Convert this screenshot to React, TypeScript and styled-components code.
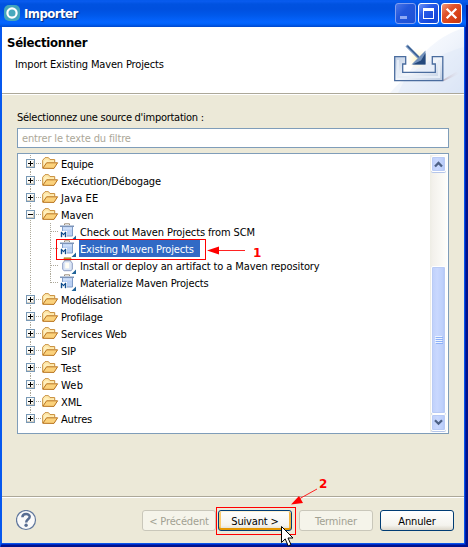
import React from 'react';
import styled, { createGlobalStyle, css } from 'styled-components';

const GlobalStyle = createGlobalStyle`
  * { box-sizing: border-box; }
  html, body { margin: 0; padding: 0; overflow: hidden; }
  body {
    font-family: "DejaVu Sans Condensed", "DejaVu Sans", Tahoma, sans-serif;
    font-stretch: condensed;
    font-size: 11px;
    line-height: 13px;
    color: #000;
  }
  svg { display: block; flex: none; }
`;

const Window = styled.div`
  position: relative;
  display: flex;
  flex-direction: column;
  width: 468px;
  height: 547px;
  overflow: hidden;
  background: #ece9d8;
`;

const TitleBar = styled.header`
  display: flex;
  flex: none;
  align-items: flex-start;
  height: 27px;
  padding: 3px 6px 0 4px;
  background: linear-gradient(#0358e8 0, #0a5cf0 1px, #0052e0 4px, #0050df 9px, #0058ea 15px, #0565ff 22px, #0062fa 24px, #0048cc 27px);
`;

const TitleText = styled.h1`
  flex: 1;
  margin: 4px 0 0 4px;
  font-size: 13px;
  line-height: 14px;
  letter-spacing: -0.55px;
  color: #fff;
  text-shadow: 1px 1px 1px #0a2a78;
`;

const Logo = styled.svg`margin-top: 2px;`;

const Controls = styled.div`
  display: flex;
  gap: 2px;
`;

const Control = styled.span<{ $kind: 'off' | 'on' | 'close' }>`
  width: 21px;
  height: 21px;
  border: 1px solid ${p => (p.$kind === 'off' ? '#7f9df0' : '#fff')};
  border-radius: 3px;
  background: ${p =>
    p.$kind === 'close'
      ? 'linear-gradient(135deg, #ee9a7d, #e0532c 35%, #d63e12 75%, #b93a1c)'
      : p.$kind === 'on'
        ? 'linear-gradient(135deg, #6e93f5, #2a5be8 35%, #1448dc 75%, #1a50d8)'
        : 'linear-gradient(135deg, #4a75e8, #2257dc 40%, #1d50d4)'};
`;

const Frame = styled.main`
  display: flex;
  flex: 1;
  flex-direction: column;
  min-height: 0;
  border: solid;
  border-width: 0 4px 4px 2px;
  border-color: #0a35d0 #0020b4 #0028c4 #0758ee;
`;

const Banner = styled.section`
  display: flex;
  flex: none;
  justify-content: space-between;
  height: 68px;
  background: #fff;
  border-bottom: 1px solid #fff;
`;

const BannerText = styled.div`
  flex: 1;
  padding: 8px 0 0 5px;
  box-shadow: inset 0 -1px 0 #aca899;
`;

const BannerTitle = styled.h2`
  margin: 0;
  font-size: 13px;
  line-height: 16px;
  letter-spacing: -0.25px;
`;

const Text = styled.span<{ $track?: number }>`
  white-space: nowrap;
  letter-spacing: ${p => p.$track ?? -0.15}px;
`;

const BannerNote = styled.p`
  margin: 7px 0 0 8px;
`;

const Content = styled.section`
  display: flex;
  flex: 1;
  flex-direction: column;
  min-height: 0;
  padding: 16px 15px 0 15px;
`;

const FilterBox = styled.div`
  height: 20px;
  margin-top: 4px;
  padding: 3px 4px;
  border: 1px solid #7f9db9;
  background: #fff;
  color: #aca899;
`;

const TreeBox = styled.div`
  display: flex;
  flex: none;
  justify-content: space-between;
  height: 281px;
  margin-top: 5px;
  border: 1px solid #7f9db9;
  background: #fff;
`;

const Rows = styled.ul`
  flex: 1;
  margin: 1px 0 0;
  padding: 0;
  list-style: none;
`;

const RowItem = styled.li`
  display: flex;
  align-items: center;
  height: 17px;
`;

const RowLabel = styled.span<{ $selected?: boolean; $child?: boolean }>`
  height: 17px;
  padding: 3px 0 0 ${p => (p.$child ? 1 : 2)}px;
  ${p => p.$selected && css`
    width: 121px;
    background: #316ac5;
    color: #fff;
  `}
`;

const Spacer = styled.span`width: 3px;`;

const ScrollBar = styled.div`
  display: flex;
  flex-direction: column;
  width: 17px;
  margin: 1px 1px 1px 0;
  padding: 1px;
  background: linear-gradient(90deg, #eeede5, #f3f1ec 3px, #fefefb);
`;

const ScrollPart = styled.div<{ $h: number }>`
  display: flex;
  flex: none;
  align-items: center;
  justify-content: center;
  width: 15px;
  height: ${p => p.$h}px;
  border: 1px solid #fff;
  border-radius: 2px;
  background: linear-gradient(90deg, #bfd0fa, #c9d8fe 40%, #bccffb 85%, #a9bff2);
  box-shadow: inset 0 0 0 1px #b9cbf5, 0 1px 0 #b5c6ea;
`;

const Track = styled.div`flex: 1;`;

const Footer = styled.footer`
  display: flex;
  flex: none;
  align-items: flex-start;
  height: 47px;
  padding: 13px 10px 0 14px;
  border-top: 1px solid #aca899;
  box-shadow: inset 0 1px 0 #fff;
`;

const Buttons = styled.div`
  display: flex;
  flex: 1;
  justify-content: flex-end;
`;

const Button = styled.button<{ $kind: 'disabled' | 'primary' | 'plain'; $gap?: number }>`
  width: 74px;
  height: 21px;
  margin: 0 0 0 ${p => p.$gap ?? 0}px;
  padding: 1px 0 0;
  border: 1px solid ${p => (p.$kind === 'disabled' ? '#c9c7ba' : '#003c74')};
  border-radius: 3px;
  background: ${p => (p.$kind === 'disabled' ? '#f5f4ea' : 'linear-gradient(#fff, #f4f3ee 75%, #dcd7cb)')};
  color: ${p => (p.$kind === 'disabled' ? '#a1a192' : '#000')};
  font: inherit;
  ${p => p.$kind === 'primary' && css`
    box-shadow: inset 0 1px 0 #fff0cf, inset 0 -2px 0 #e59700, inset 2px 0 0 #fbca6a, inset -2px 0 0 #f5b53e;
  `}
`;

const Overlay = styled.svg`
  position: absolute;
  inset: 0;
  pointer-events: none;
`;

const Expander = ({ open, last }: { open?: boolean; last?: boolean }) => (
  <svg width="24" height="17" viewBox="0 0 24 17" shapeRendering="crispEdges">
    <path d={`M12.5 0V${last ? 8 : 17}M18 8.5h6`} stroke="#aca899" strokeDasharray="1 1" fill="none" />
    <rect x="8.5" y="4.5" width="8" height="8" fill="#fafaf7" stroke="#7898b5" />
    <path d="M9 11.5h7M15.5 6v6" stroke="#d4cdbf" />
    <path d={open ? 'M10 8.5h5' : 'M10 8.5h5M12.5 6v5'} stroke="#000" />
  </svg>
);

const Folder = () => (
  <svg width="17" height="17" viewBox="0 0 17 17">
    <path d="M.7 13V5.2L3 2.7h3.5L8 4.6h4.7v2.6" fill="#fff0bd" stroke="#c78b36" />
    <path d="M.8 13.3L4.6 7.8h11L12 13.4z" fill="#fbd27c" stroke="#b8731f" />
    <path d="M2 5.8L3.5 4h2.4l1.4 2h4" fill="none" stroke="#ffe39c" />
  </svg>
);

const ChildLines = ({ last }: { last?: boolean }) => (
  <svg width="41" height="17" viewBox="0 0 41 17" shapeRendering="crispEdges">
    <path d={`M12.5 1V17M32.5 0V${last ? 9 : 17}M33 8.5h8`} stroke="#aca899" strokeDasharray="1 1" fill="none" />
  </svg>
);

const Corner = () => <path d="M17 12.500V17h-4.500z" fill="#1f6298" />;

const MavenIcon = () => (
  <svg width="17" height="17" viewBox="0 0 17 17">
    <path d="M5.5 2V.8h5V2" fill="none" stroke="#9a8e7c" />
    <path d="M3.500 3.500h10v9.500h-10z" fill="#b8cff3" stroke="#7f9cc8" />
    <path d="M1 2.500h14v1.500H1z" fill="#7d94b8" />
    <path d="M4 4.500h9v2H4z" fill="#cfdff8" />
    <path d="M1 8h7v7H1z" fill="#fff" />
    <path d="M2 9h1v1h1v1h1v-1h1V9h1v5H6v-3H5v1H4v-1H3v3H2z" fill="#0f4f8d" stroke="#0f4f8d" strokeWidth=".4" />
    <Corner />
  </svg>
);

const JarIcon = () => (
  <svg width="17" height="17" viewBox="0 0 17 17">
    <path d="M5 .8h7v2.400H5z" fill="#c69b3b" stroke="#a6771c" strokeWidth=".6" />
    <path d="M5.700 3.700h5.600l2 2.500v6.200l-1.400 1.300H5.100l-1.400-1.300V6.200z" fill="#dbe5f6" stroke="#8b9cc2" />
    <path d="M6.200 5.600h4v5.800h-4z" fill="#fffef5" />
    <Corner />
  </svg>
);

type Node = { text: string; track?: number; kind?: 'maven' | 'jar'; open?: boolean; selected?: boolean };

const nodes: Node[] = [
  { text: 'Equipe', track: -0.25 },
  { text: 'Exécution/Débogage' },
  { text: 'Java EE', track: 0.1 },
  { text: 'Maven', track: -0.05 },
  { text: 'Check out Maven Projects from SCM', kind: 'maven', track: -0.12 },
  { text: 'Existing Maven Projects', kind: 'maven', selected: true },
  { text: 'Install or deploy an artifact to a Maven repository', kind: 'jar', track: -0.11 },
  { text: 'Materialize Maven Projects', kind: 'maven' },
  { text: 'Modélisation' },
  { text: 'Profilage' },
  { text: 'Services Web', track: -0.05 },
  { text: 'SIP' },
  { text: 'Test', track: 0.3 },
  { text: 'Web', track: 0.2 },
  { text: 'XML' },
  { text: 'Autres' },
].map(n => (n.text === 'Maven' ? { ...n, open: true } : n) as Node);

const TreeRow = ({ node, index }: { node: Node; index: number }) => (
  <RowItem>
    {node.kind ? <ChildLines last={index === 7} /> : <Expander open={node.open} last={index === nodes.length - 1} />}
    {node.kind === 'maven' ? <MavenIcon /> : node.kind === 'jar' ? <JarIcon /> : <Folder />}
    {node.kind && <Spacer />}
    <RowLabel $selected={node.selected} $child={!!node.kind}>
      <Text $track={node.track}>{node.text}</Text>
    </RowLabel>
  </RowItem>
);

const Chevron = ({ down }: { down?: boolean }) => (
  <svg width="9" height="7" viewBox="0 0 9 7">
    <path d={down ? 'M1 1.2l3.5 3.5L8 1.2' : 'M1 5.5L4.5 2 8 5.5'} fill="none" stroke="#4d6185" strokeWidth="2.3" />
  </svg>
);

const BannerArt = () => (
  <svg width="84" height="67" viewBox="380 27 84 67">
    <defs>
      <linearGradient id="sweep" x1="0" y1="0" x2="1" y2="1">
        <stop offset="0" stopColor="#fff" />
        <stop offset=".5" stopColor="#f1f5fc" />
        <stop offset="1" stopColor="#dbe5f5" />
      </linearGradient>
      <linearGradient id="tray" x1="0" y1="0" x2="1" y2="1">
        <stop offset="0" stopColor="#c4d2e6" />
        <stop offset=".5" stopColor="#f1f5fb" />
        <stop offset="1" stopColor="#bccbe1" />
      </linearGradient>
      <linearGradient id="shade" x1="0" y1="0" x2="1" y2="0">
        <stop offset="0" stopColor="#b9a9b4" />
        <stop offset="1" stopColor="#e8e9f4" stopOpacity="0" />
      </linearGradient>
      <radialGradient id="glow">
        <stop offset="0" stopColor="#fff4bb" />
        <stop offset="1" stopColor="#fff9dc" stopOpacity="0" />
      </radialGradient>
    </defs>
    <path d="M464 28C435 36 413 60 398 93H464z" fill="url(#sweep)" />
    <path d="M464 47C435 55 408 72 390 93H464z" fill="#d9e4f5" opacity=".35" />
    <path d="M441 81L456 72l5 1-17 8z" fill="url(#shade)" />
    <circle cx="418" cy="59" r="11" fill="url(#glow)" />
    <path d="M394.700 56.700h11v7.300h-3v8.300h32.600v-8.300h-3v-7.300h10.500v24h-48.100z" fill="url(#tray)" stroke="#4a6c9e" strokeWidth="1.300" />
    <path d="M398 60v17h41V60" fill="none" stroke="#e6edf7" strokeWidth="2" />
    <path d="M406.500 45.500l12 12" stroke="#7f9cc4" strokeWidth="3" />
    <path d="M407.500 46l12 12" stroke="#365b8e" strokeWidth="1.300" />
    <path d="M425.500 50.500v14h-14z" fill="#7291bb" />
    <path d="M425.500 53v11.500h-13l8.500-4z" fill="#24497c" />
    <path d="M380 93.500h84" stroke="#aca899" />
  </svg>
);

const BannerFigure = styled.div`
  height: 67px;
  overflow: hidden;
`;

const Help = () => (
  <svg width="22" height="22" viewBox="0 0 22 22">
    <circle cx="10" cy="10" r="9.5" fill="#fafafa" stroke="#60779d" strokeWidth="1.2" />
    <path d="M6.4 7.2C6.5 3.2 13.7 3 13.7 6.8c0 2.5-3.5 2.5-3.5 5.6" fill="none" stroke="#586d92" strokeWidth="2.5" />
    <circle cx="10.1" cy="15.2" r="1.7" fill="#586d92" />
  </svg>
);

const Mark = styled.text`
  font: bold 12px "DejaVu Sans", sans-serif;
  fill: #f00;
`;

export default function App() {
  return (
    <Window>
      <GlobalStyle />
      <TitleBar>
        <Logo width="16" height="16" viewBox="0 0 16 16">
          <rect width="16" height="16" rx="5" fill="#43a5bb" />
          <circle cx="8" cy="8" r="4.6" fill="#48a9bd" stroke="#fff" strokeWidth="2.2" />
        </Logo>
        <TitleText>Importer</TitleText>
        <Controls>
          <Control $kind="off">
            <svg width="19" height="19"><path d="M4 12h7v3H4z" fill="#8ea9f4" /></svg>
          </Control>
          <Control $kind="on">
            <svg width="19" height="19" shapeRendering="crispEdges"><path d="M4 4h11v11H4zM5 7v7h9V7z" fillRule="evenodd" fill="#fff" /></svg>
          </Control>
          <Control $kind="close">
            <svg width="19" height="19"><path d="M4.7 4.7l9.6 9.6M14.3 4.7l-9.6 9.6" stroke="#fff" strokeWidth="2.3" /></svg>
          </Control>
        </Controls>
      </TitleBar>
      <Frame>
        <Banner>
          <BannerText>
            <BannerTitle>Sélectionner</BannerTitle>
            <BannerNote><Text>Import Existing Maven Projects</Text></BannerNote>
          </BannerText>
          <BannerFigure><BannerArt /></BannerFigure>
        </Banner>
        <Content>
          <Text $track={-0.27}>Sélectionnez une source d'importation :</Text>
          <FilterBox><Text>entrer le texte du filtre</Text></FilterBox>
          <TreeBox>
            <Rows>
              {nodes.map((node, i) => <TreeRow key={node.text} node={node} index={i} />)}
            </Rows>
            <ScrollBar>
              <ScrollPart $h={16}><Chevron /></ScrollPart>
              <Track />
              <ScrollPart $h={148}>
                <svg width="8" height="8" shapeRendering="crispEdges">
                  <path d="M0 .5h7M0 2.5h7M0 4.5h7M0 6.5h7" stroke="#eef4fe" />
                  <path d="M1 1.5h7M1 3.5h7M1 5.5h7M1 7.5h7" stroke="#8cb0f8" />
                </svg>
              </ScrollPart>
              <ScrollPart $h={17}><Chevron down /></ScrollPart>
            </ScrollBar>
          </TreeBox>
        </Content>
        <Footer>
          <Help />
          <Buttons>
            <Button $kind="disabled"><Text>&lt; Précédent</Text></Button>
            <Button $kind="primary" $gap={2}><Text>Suivant &gt;</Text></Button>
            <Button $kind="disabled" $gap={7}><Text>Terminer</Text></Button>
            <Button $kind="plain" $gap={7}><Text>Annuler</Text></Button>
          </Buttons>
        </Footer>
      </Frame>
      <Overlay width="468" height="547" viewBox="0 0 468 547">
        <path d="M467 5V546H1" fill="none" stroke="#00138c" strokeWidth="2" />
        <path d="M464.5 27V543.5H2" fill="none" stroke="#0a55e8" />
        <rect x="56.5" y="239.5" width="149" height="20" fill="none" stroke="#f00" />
        <rect x="216.5" y="507.5" width="79" height="27" fill="none" stroke="#f00" />
        <path d="M218 250.5h27M317 489l-18 10" stroke="#f22" fill="none" />
        <path d="M207 250.5l12-4v8zM291 504.5l8-8.500 4 7z" fill="#f00" />
        <Mark x="253" y="257">1</Mark>
        <Mark x="319" y="488">2</Mark>
        <path d="M281.5 526.5v16l3.700-3.600 3 7 2.800-1.200-3-6.700h5z" fill="#fff" stroke="#000" />
      </Overlay>
    </Window>
  );
}
